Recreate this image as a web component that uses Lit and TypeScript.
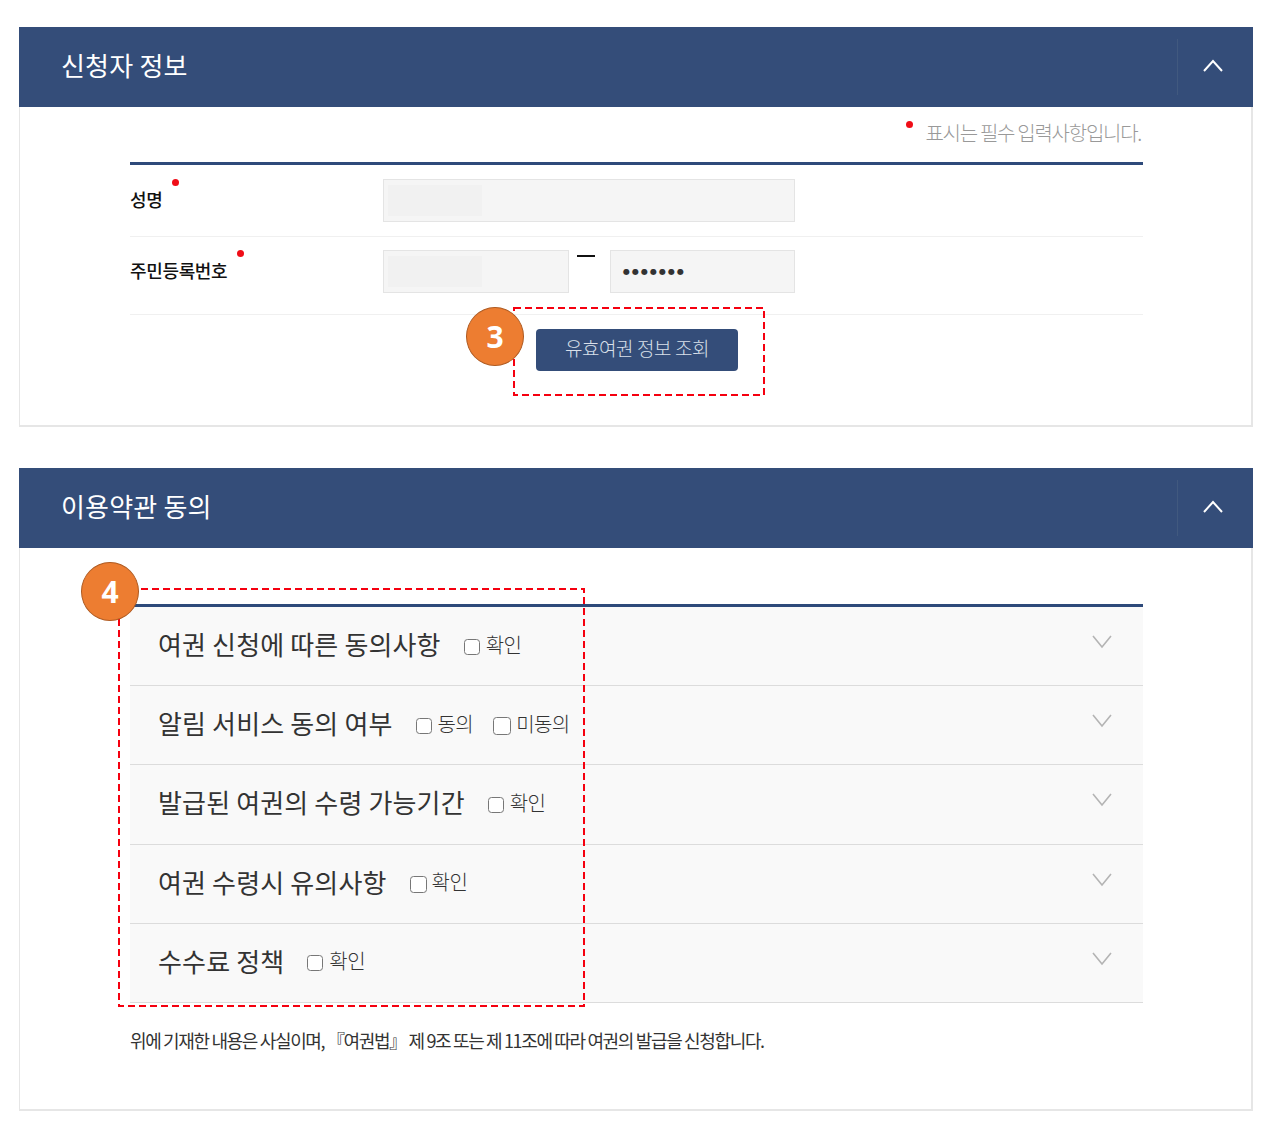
import { LitElement, html, css } from "lit";
import { customElement } from "lit/decorators.js";

const up = html`<svg class="chev" width="24" height="16" viewBox="0 0 24 16"><path d="M3 13 L12 3 L21 13" fill="none" stroke="#fff" stroke-width="2"/></svg>`;
const down = html`<svg class="cd" width="22" height="16" viewBox="0 0 22 16"><path d="M2 2 L11 13 L20 2" fill="none" stroke="#b4b4b4" stroke-width="1.6"/></svg>`;

const terms: { title: string; opts: string[] }[] = [
  { title: "여권 신청에 따른 동의사항", opts: ["확인"] },
  { title: "알림 서비스 동의 여부", opts: ["동의", "미동의"] },
  { title: "발급된 여권의 수령 가능기간", opts: ["확인"] },
  { title: "여권 수령시 유의사항", opts: ["확인"] },
  { title: "수수료 정책", opts: ["확인"] },
];

@customElement("app-root")
export class AppRoot extends LitElement {
  static styles = css`
    :host {
      display: block;
      position: relative;
      height: 1125px;
      background: #fff;
      font-family: "Noto Sans CJK KR", "Noto Sans", sans-serif;
      color: #222;
      overflow: hidden;
    }
    .page { padding: 27px 24px 0 19px; display: flex; flex-direction: column; gap: 41px; }
    .panel { display: flex; flex-direction: column; border: solid #e6e6e6; border-width: 0 2px 2px 1px; }
    .head {
      height: 80px; margin: 0 -2px 0 -1px; background: #344d79; color: #fff;
      display: flex; align-items: center; justify-content: space-between;
      padding-left: 42px; box-sizing: border-box;
    }
    .head h2 { margin: 0 0 5px; font-size: 26px; font-weight: 400; letter-spacing: 0.2px; line-height: 1; }
    .toggle {
      width: 76px; height: 56px; border-left: 1px solid #41597f; padding-right: 6px;
      display: flex; align-items: center; justify-content: center; box-sizing: border-box;
    }
    .chev { margin-top: -2px; }
    .body-a { height: 318px; padding: 0 108px 0 110px; box-sizing: border-box; display: flex; flex-direction: column; }
    .body-b { height: 561px; padding: 56px 108px 0 110px; box-sizing: border-box; display: flex; flex-direction: column; }
    .notice {
      height: 55px; box-sizing: border-box; display: flex; justify-content: flex-end; align-items: center;
      gap: 12px; color: #999; font-size: 20px; letter-spacing: -1.27px; font-weight: 300; padding: 0 2px 4px 0;
    }
    .req { width: 7px; height: 7px; border-radius: 50%; background: #f00d17; flex: none; }
    .notice .req { margin-top: -17px; }
    .tbl { border-top: 3px solid #2e4a7a; }
    .row { display: flex; border-bottom: 1px solid #f0f0f0; }
    .r1 { padding: 14px 0 14px; }
    .r2 { padding: 13px 0 21px; }
    .lab {
      width: 253px; flex: none; display: flex; font-size: 18px; letter-spacing: -0.35px; font-weight: 500;
      color: #111; line-height: 1; padding-top: 11px; box-sizing: border-box;
    }
    .lab .req { margin: -11px 0 0 10px; }
    .inp {
      height: 43px; box-sizing: border-box; background: #f5f5f5; border: 1px solid #e4e4e4;
      padding: 5px 4px; display: flex;
    }
    .inp i { display: block; width: 94px; background: #f1f1f1; }
    .w1 { width: 412px; }
    .w2 { width: 186px; }
    .w3 { width: 185px; padding: 0 12px; align-items: center; }
    .dots { font-family: "DejaVu Sans", sans-serif; font-size: 8px; letter-spacing: 2px; color: #333; line-height: 1; font-weight: 700; }
    .dash { width: 41px; display: flex; justify-content: flex-start; padding: 5px 0 0 8px; box-sizing: border-box; }
    .dash b { display: block; width: 18px; height: 2px; background: #111; }
    .btn-row { display: flex; justify-content: center; padding: 14px 0 0 0; }
    .btn {
      width: 202px; height: 42px; border: 0; border-radius: 4px; background: #344d79; color: #d9e0ea;
      font: 300 19px "Noto Sans CJK KR", sans-serif; letter-spacing: -0.4px; padding: 0 0 6px; margin-left: 1px;
    }
    .acc { border-top: 3px solid #2e4a7a; }
    .term {
      height: 79.2px; box-sizing: border-box; background: #f9f9f9; border-bottom: 1.5px solid #dcdcdc;
      display: flex; align-items: center; padding: 0 30px 0 28px;
    }
    .term h3 { margin: 0 0 4px; font-size: 26px; font-weight: 400; color: #333; letter-spacing: 0.15px; line-height: 1; }
    .opts { display: flex; gap: 20px; margin-left: 23px; }
    .opts label { display: flex; align-items: center; gap: 6px; font-size: 20px; letter-spacing: -0.6px; color: #333; font-weight: 300; line-height: 1; }
    .opts input { appearance: none; margin: 1px 0 0; width: 16px; height: 16px; border: 1.5px solid #777; border-radius: 3.5px; background: #fff; box-sizing: border-box; }
    .opts label:nth-child(2) input { width: 18px; height: 18px; margin-right: -1px; }
    .term:nth-child(4) input { width: 17px; height: 17px; margin-right: -1px; }
    .opts span { margin-top: -3px; }
    .cd { margin-left: auto; margin-top: -8px; }
    .foot { margin: 0; padding-top: 25px; font-size: 18px; letter-spacing: -1.35px; color: #333; line-height: 24px; font-weight: 400; }
    .box { position: absolute; }
    .box rect { fill: none; stroke: #f5000f; stroke-width: 2; stroke-dasharray: 7 4; }
    .b3 { left: 513px; top: 307px; }
    .b4 { left: 118px; top: 588px; }
    .mark {
      position: absolute; width: 58px; height: 59px; border-radius: 50%; box-sizing: border-box;
      background: #ed7d31; border: 1.5px solid #ae5a21; color: #fff; font: 700 30px "Open Sans", sans-serif;
      display: flex; align-items: center; justify-content: center;
    }
    .m3 { left: 466px; top: 307px; }
    .m4 { left: 81px; top: 562px; }
  `;

  render() {
    return html`
      <div class="page">
        <section class="panel">
          <div class="head"><h2>신청자 정보</h2><div class="toggle">${up}</div></div>
          <div class="body-a">
            <div class="notice"><span class="req"></span><span>표시는 필수 입력사항입니다.</span></div>
            <div class="tbl">
              <div class="row r1">
                <div class="lab">성명<span class="req"></span></div>
                <div class="inp w1"><i></i></div>
              </div>
              <div class="row r2">
                <div class="lab">주민등록번호<span class="req"></span></div>
                <div class="inp w2"><i></i></div>
                <div class="dash"><b></b></div>
                <div class="inp w3"><span class="dots">●●●●●●●</span></div>
              </div>
            </div>
            <div class="btn-row"><button class="btn">유효여권 정보 조회</button></div>
          </div>
        </section>
        <section class="panel">
          <div class="head"><h2>이용약관 동의</h2><div class="toggle">${up}</div></div>
          <div class="body-b">
            <div class="acc">
              ${terms.map(
                (t) => html`<div class="term">
                  <h3>${t.title}</h3>
                  <div class="opts">
                    ${t.opts.map((o) => html`<label><input type="checkbox" /><span>${o}</span></label>`)}
                  </div>
                  ${down}
                </div>`
              )}
            </div>
            <p class="foot">위에 기재한 내용은 사실이며, 『여권법』 제 9조 또는 제 11조에 따라 여권의 발급을 신청합니다.</p>
          </div>
        </section>
      </div>
      <svg class="box b3" width="252" height="89"><rect x="1" y="1" width="250" height="87"></rect></svg>
      <svg class="box b4" width="467" height="420"><rect x="1" y="1" width="465" height="417"></rect></svg>
      <div class="mark m3">3</div>
      <div class="mark m4">4</div>
    `;
  }
}
